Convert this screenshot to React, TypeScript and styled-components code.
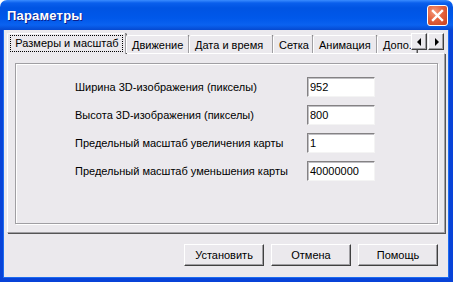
import React from 'react';
import styled, { createGlobalStyle } from 'styled-components';

const GlobalStyle = createGlobalStyle`
  html, body {
    margin: 0;
    padding: 0;
    background: #ffffff;
  }
  * {
    box-sizing: border-box;
  }
`;

const Window = styled.div`
  width: 453px;
  height: 282px;
  display: flex;
  flex-direction: column;
  font-family: 'Liberation Sans', Arial, sans-serif;
  font-size: 11px;
  color: #000;
  border-radius: 7px 7px 0 0;
  overflow: hidden;
`;

const TitleBar = styled.div`
  height: 30px;
  flex: none;
  display: flex;
  align-items: center;
  justify-content: space-between;
  padding: 0 5px 0 7px;
  background: linear-gradient(
    to bottom,
    #3a8cff 0px,
    #0a5fec 3px,
    #0054e3 8px,
    #0058ea 18px,
    #0a62f0 25px,
    #0549d0 30px
  );
`;

const Title = styled.span`
  color: #fff;
  font-weight: bold;
  font-size: 13px;
  letter-spacing: 0.2px;
  text-shadow: 1px 1px 0 #0a1e8c;
`;

const CloseButton = styled.div`
  width: 21px;
  height: 21px;
  border: 1px solid #fff;
  border-radius: 3px;
  background: radial-gradient(circle at 35% 30%, #f59a7c 0%, #e4623d 45%, #c8411c 100%);
  display: flex;
  align-items: center;
  justify-content: center;
`;

const Body = styled.div`
  flex: 1;
  display: flex;
  flex-direction: column;
  background: #ebe9ed;
  border-left: 3px solid #0843d8;
  border-right: 4px solid #0843d8;
  border-bottom: 4px solid #0843d8;
  box-shadow: inset 1px 0 0 #1c6bf0, inset -1px 0 0 #1c6bf0, inset 0 -1px 0 #1c6bf0;
  padding: 3px 4px 12px 4px;
`;

const TabStrip = styled.div`
  position: relative;
  height: 20px;
  display: flex;
  align-items: flex-end;
  z-index: 1;
`;

const Tab = styled.div<{ $active?: boolean; $w: number }>`
  width: ${(p) => p.$w}px;
  flex: none;
  height: ${(p) => (p.$active ? 21 : 18)}px;
  margin-bottom: ${(p) => (p.$active ? -1 : 0)}px;
  background: #ebe9ed;
  border-top: 1px solid #fff;
  border-left: 1px solid #fff;
  border-right: 1px solid #a09fa3;
  border-radius: 2px 2px 0 0;
  box-shadow: 1px 0 0 #555;
  display: flex;
  align-items: center;
  justify-content: ${(p) => (p.$active ? 'center' : 'flex-start')};
  padding-left: ${(p) => (p.$active ? 0 : 5)}px;
  white-space: nowrap;
  overflow: hidden;
`;

const FocusLabel = styled.span`
  outline: 1px dotted #000;
  padding: 1px 3px 2px 4px;
  margin-top: -1px;
`;

const ScrollButtons = styled.div`
  position: absolute;
  right: 1px;
  top: 0;
  display: flex;
  gap: 1px;
`;

const ScrollButton = styled.div`
  width: 16px;
  height: 17px;
  background: #ebe9ed;
  border-top: 1px solid #fff;
  border-left: 1px solid #fff;
  border-right: 1px solid #404040;
  border-bottom: 1px solid #404040;
  box-shadow: inset -1px -1px 0 #a09fa3;
  display: flex;
  align-items: center;
  justify-content: center;
`;

const Panel = styled.div`
  height: 180px;
  flex: none;
  border-top: 1px solid #fff;
  border-left: 1px solid #fff;
  border-right: 1px solid #a09fa3;
  border-bottom: 1px solid #a09fa3;
  box-shadow: 1px 1px 0 #555;
  padding: 9px 6px 8px 7px;
  display: flex;
`;

const Group = styled.div`
  flex: 1;
  border: 1px solid #a09fa3;
  box-shadow: 1px 1px 0 #fff, inset 1px 1px 0 #fff;
  padding: 13px 0 0 59px;
  display: grid;
  grid-template-columns: 232px 68px;
  grid-auto-rows: 20px;
  row-gap: 8px;
  align-content: start;
`;

const Label = styled.span`
  align-self: center;
  white-space: nowrap;
`;

const Field = styled.div`
  height: 20px;
  background: #fff;
  border-top: 1px solid #848284;
  border-left: 1px solid #848284;
  border-right: 1px solid #f4f4f4;
  border-bottom: 1px solid #f4f4f4;
  box-shadow: inset 1px 1px 0 #c0bfc3;
  padding: 0 2px;
  display: flex;
  align-items: center;
`;

const ButtonRow = styled.div`
  margin-top: 11px;
  display: flex;
  justify-content: flex-end;
  gap: 7px;
  padding-right: 7px;
`;

const Button = styled.div`
  width: 80px;
  height: 22px;
  background: #ebe9ed;
  border-top: 1px solid #fff;
  border-left: 1px solid #fff;
  border-right: 1px solid #404040;
  border-bottom: 1px solid #404040;
  box-shadow: inset -1px -1px 0 #a09fa3;
  display: flex;
  align-items: center;
  justify-content: center;
`;

const tabs = [
  { label: 'Движение', w: 63 },
  { label: 'Дата и время', w: 84 },
  { label: 'Сетка', w: 40 },
  { label: 'Анимация', w: 64 },
  { label: 'Допо.', w: 40 },
];

const rows = [
  { label: 'Ширина 3D-изображения (пикселы)', value: '952' },
  { label: 'Высота 3D-изображения (пикселы)', value: '800' },
  { label: 'Предельный масштаб увеличения карты', value: '1' },
  { label: 'Предельный масштаб уменьшения карты', value: '40000000' },
];

export default function App() {
  return (
    <>
      <GlobalStyle />
      <Window>
        <TitleBar>
          <Title>Параметры</Title>
          <CloseButton>
            <svg width="13" height="13" viewBox="0 0 13 13">
              <path d="M2 2 L11 11 M11 2 L2 11" stroke="#fff" strokeWidth="2.4" strokeLinecap="square" />
            </svg>
          </CloseButton>
        </TitleBar>
        <Body>
          <TabStrip>
            <Tab $active $w={119}>
              <FocusLabel>Размеры и масштаб</FocusLabel>
            </Tab>
            {tabs.map((t) => (
              <Tab key={t.label} $w={t.w}>
                {t.label}
              </Tab>
            ))}
            <ScrollButtons>
              <ScrollButton>
                <svg width="5" height="8" viewBox="0 0 5 8">
                  <path d="M4 0 L4 8 L0 4 Z" fill="#000" />
                </svg>
              </ScrollButton>
              <ScrollButton>
                <svg width="5" height="8" viewBox="0 0 5 8">
                  <path d="M1 0 L1 8 L5 4 Z" fill="#000" />
                </svg>
              </ScrollButton>
            </ScrollButtons>
          </TabStrip>
          <Panel>
            <Group>
              {rows.map((r) => (
                <React.Fragment key={r.label}>
                  <Label>{r.label}</Label>
                  <Field>{r.value}</Field>
                </React.Fragment>
              ))}
            </Group>
          </Panel>
          <ButtonRow>
            <Button>Установить</Button>
            <Button>Отмена</Button>
            <Button>Помощь</Button>
          </ButtonRow>
        </Body>
      </Window>
    </>
  );
}
